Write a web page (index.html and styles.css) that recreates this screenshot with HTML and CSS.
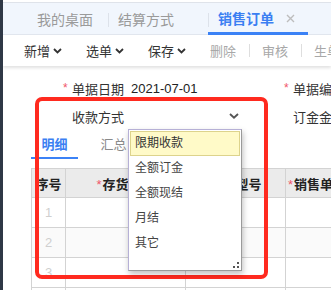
FILE: index.html
```html
<!DOCTYPE html>
<html lang="zh-CN">
<head>
  <meta charset="UTF-8">
  <title>销售订单</title>
  <link rel="stylesheet" href="styles.css">
</head>
<body>
  <div class="app">
    <div class="sidebar"></div>
    <div class="main">
      <!-- page tabs -->
      <div class="tabbar">
        <div class="tab first">我的桌面</div>
        <div class="tab">结算方式<span class="close hidden"></span></div>
        <div class="tab active">销售订单
          <span class="close">
            <svg width="9" height="9" viewBox="0 0 9 9"><path d="M1 1L8 8M8 1L1 8" stroke="#bdbdbd" stroke-width="1.4" fill="none"/></svg>
          </span>
        </div>
      </div>

      <!-- toolbar -->
      <div class="toolbar">
        <div class="tool">新增<svg class="chev" width="9" height="6" viewBox="0 0 9 6"><polyline points="1,1 4.5,4.5 8,1" stroke="#333" stroke-width="1.8" fill="none"/></svg></div>
        <div class="tool">选单<svg class="chev" width="9" height="6" viewBox="0 0 9 6"><polyline points="1,1 4.5,4.5 8,1" stroke="#333" stroke-width="1.8" fill="none"/></svg></div>
        <div class="tool">保存<svg class="chev" width="9" height="6" viewBox="0 0 9 6"><polyline points="1,1 4.5,4.5 8,1" stroke="#333" stroke-width="1.8" fill="none"/></svg></div>
        <div class="tool disabled">删除</div>
        <span class="sep"></span>
        <div class="tool disabled">审核</div>
        <span class="sep"></span>
        <div class="tool disabled">生单</div>
      </div>

      <div class="content">
        <div class="form">
          <div class="field"><span class="req">*</span><span class="label">单据日期</span><span class="value">2021-07-01</span></div>
          <div class="field"><span class="req">*</span><span class="label">单据编号</span></div>
          <div class="field">
            <span class="req"></span>
            <div class="select">
              <span>收款方式</span>
              <svg width="10" height="6" viewBox="0 0 10 6"><polyline points="1,1 5,4.6 9,1" stroke="#555" stroke-width="1.9" fill="none"/></svg>
            </div>
          </div>
          <div class="field"><span class="req"></span><span class="label">订金金额</span></div>
        </div>

        <div class="subtabs">
          <div class="subtab active">明细</div>
          <div class="subtab">汇总</div>
        </div>

        <table class="grid">
          <colgroup>
            <col style="width:34px">
            <col style="width:120px">
            <col style="width:100px">
            <col style="width:70px">
          </colgroup>
          <thead>
            <tr>
              <th>序号</th>
              <th><span class="star">*</span>存货编码</th>
              <th>规格型号</th>
              <th class="left"><span class="star">*</span>销售单位</th>
            </tr>
          </thead>
          <tbody>
            <tr><td class="num">1</td><td></td><td></td><td></td></tr>
            <tr class="odd"><td class="num">2</td><td></td><td></td><td></td></tr>
            <tr><td class="num">3</td><td></td><td></td><td></td></tr>
            <tr><td class="num">4</td><td></td><td></td><td></td></tr>
          </tbody>
        </table>
      </div>
    </div>
  </div>

  <!-- annotation frame -->
  <div class="highlight"></div>

  <!-- open select menu -->
  <div class="dropdown">
    <div class="option current">限期收款</div>
    <div class="option">全额订金</div>
    <div class="option">全额现结</div>
    <div class="option">月结</div>
    <div class="option">其它</div>
    <div class="grip">
      <svg width="8" height="8" viewBox="0 0 8 8">
        <rect x="5" y="1" width="2" height="2" fill="#555"/>
        <rect x="1" y="5" width="2" height="2" fill="#555"/>
        <rect x="5" y="5" width="2" height="2" fill="#555"/>
      </svg>
    </div>
  </div>
</body>
</html>
```

FILE: styles.css
```css
/* Base */
html, body {
  margin: 0;
  padding: 0;
  height: 100%;
  overflow: hidden;
  background: #fff;
}

body {
  font-family: "Liberation Sans", "Noto Sans CJK SC", sans-serif;
  font-size: 13px;
  color: #333;
}

.app {
  display: flex;
  height: 100%;
}

.sidebar {
  width: 3px;
  flex: none;
  background: #2f3846;
}

.main {
  flex: 1;
  min-width: 0;
  overflow: hidden;
}

/* Page tabs */
.tabbar {
  margin-top: 2px;
  height: 31px;
  border-top: 1px solid #dfe3ea;
  border-bottom: 1px solid #e2e7ef;
  background: #f1f6fd;
  display: flex;
  align-items: stretch;
  padding-left: 24px;
}

.tab {
  position: relative;
  flex: none;
  display: flex;
  align-items: center;
  padding: 0 13px 0 10px;
  font-size: 14px;
  color: #9a9a9a;
  white-space: nowrap;
  box-sizing: border-box;
}

.tab.first {
  padding: 0 15px 0 10px;
}

.tab + .tab::before {
  content: "";
  position: absolute;
  left: 0;
  top: 10px;
  width: 1px;
  height: 14px;
  background: #dde2ea;
}

.tab .close {
  display: inline-flex;
  width: 9px;
  margin-left: 12px;
}

.tab .close.hidden {
  visibility: hidden;
}

.tab.active {
  color: #3b7ff2;
  font-weight: bold;
  border-bottom: 3px solid #3b82f6;
  margin-bottom: -1px;
  padding-top: 1px;
}

/* Toolbar */
.toolbar {
  height: 31px;
  display: flex;
  align-items: center;
  padding-left: 21px;
  box-shadow: 0 2px 3px rgba(0, 0, 0, 0.12);
  position: relative;
}

.tool {
  flex: none;
  display: flex;
  align-items: center;
  margin-right: 24px;
  font-size: 13px;
  color: #333;
  white-space: nowrap;
}

.tool .chev {
  margin-left: 3px;
}

.tool.disabled {
  color: #a8a8a8;
  margin-right: 0;
}

.sep {
  flex: none;
  width: 1px;
  height: 13px;
  background: #dedede;
  margin: 0 12px 0 13px;
}

/* Content */
.content {
  padding-left: 28px;
}

.form {
  display: grid;
  grid-template-columns: 221px 221px;
  margin-top: 8px;
  padding-left: 32px;
}

.field {
  display: flex;
  align-items: center;
  height: 28px;
  white-space: nowrap;
}

.req {
  width: 9px;
  flex: none;
  color: #f0556a;
  font-size: 12px;
}

.label {
  color: #333;
}

.value {
  margin-left: 7px;
  color: #222;
}

.select {
  display: flex;
  align-items: center;
  justify-content: space-between;
  width: 167px;
}

/* Detail tabs */
.subtabs {
  display: flex;
  margin-top: 2px;
}

.subtab {
  width: 47px;
  text-align: center;
  line-height: 25px;
  font-size: 13px;
  color: #8a8a8a;
  border-bottom: 2px solid transparent;
}

.subtab + .subtab {
  margin-left: 12px;
}

.subtab.active {
  color: #3b7ff2;
  font-weight: bold;
  border-bottom-color: #3b82f6;
}

/* Grid */
.grid {
  margin-top: 9px;
  border-collapse: collapse;
  table-layout: fixed;
  width: 324px;
}

.grid th,
.grid td {
  border: 1px solid #d3d3d3;
  height: 29px;
  padding: 0;
  white-space: nowrap;
  overflow: hidden;
}

.grid th {
  background: #ebebeb;
  font-size: 13px;
  font-weight: bold;
  color: #222;
  text-align: center;
  height: 28px;
}

.grid th.left {
  text-align: left;
  padding-left: 2px;
}

.star {
  color: #f0556a;
  font-weight: normal;
  margin-right: 1px;
}

.grid td.num {
  text-align: center;
  color: #cfcfcf;
  font-size: 13px;
}

.grid tr.odd td {
  background: #fafafa;
}

/* Annotation frame */
.highlight {
  position: absolute;
  left: 35px;
  top: 97px;
  width: 233px;
  height: 182px;
  box-sizing: border-box;
  border: 4px solid #ff2a1f;
  border-radius: 7px;
}

/* Dropdown menu */
.dropdown {
  position: absolute;
  left: 128px;
  top: 129px;
  width: 114px;
  height: 142px;
  box-sizing: border-box;
  padding: 1px;
  background: #fff;
  border: 1px solid #b6b0d6;
  border-right-color: #9a9a9a;
  border-bottom-color: #9a9a9a;
  box-shadow: 1px 3px 6px rgba(0, 0, 0, 0.25);
}

.option {
  height: 25px;
  line-height: 23px;
  padding-left: 4px;
  border: 1px solid transparent;
  box-sizing: border-box;
  font-size: 12px;
  color: #444;
}

.option.current {
  background: #fffac8;
  border-color: #ddd38c;
  color: #333;
}

.grip {
  display: flex;
  justify-content: flex-end;
  padding-top: 5px;
}
```
